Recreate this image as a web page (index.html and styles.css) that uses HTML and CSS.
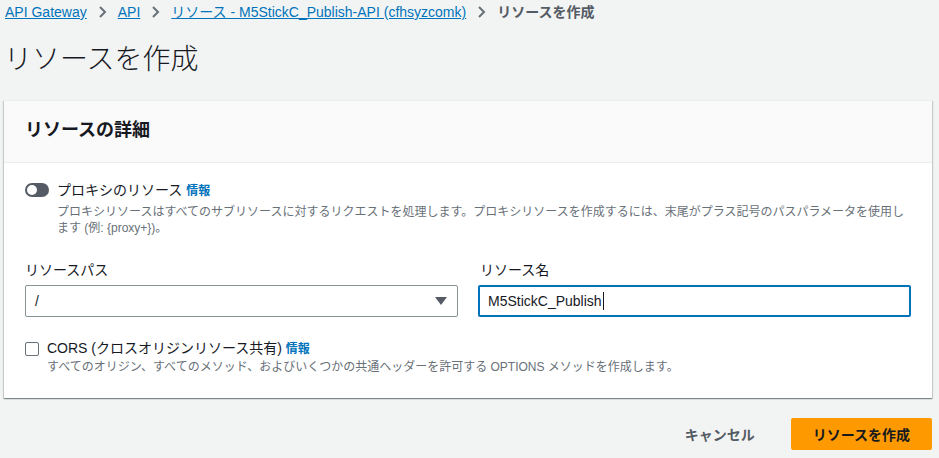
FILE: index.html
```html
<!DOCTYPE html>
<html lang="ja">
<head>
	<meta charset="UTF-8">
	<title>リソースを作成</title>
	<link rel="stylesheet" href="styles.css">
</head>
<body>
	<div class="page">
		<nav class="crumbs">
			<a href="#">API Gateway</a>
			<svg class="sep" width="10" height="12" viewBox="0 0 10 12"><polyline points="2,1 7,6 2,11" fill="none" stroke="#687078" stroke-width="2"/></svg>
			<a href="#">API</a>
			<svg class="sep" width="10" height="12" viewBox="0 0 10 12"><polyline points="2,1 7,6 2,11" fill="none" stroke="#687078" stroke-width="2"/></svg>
			<a href="#">リソース - M5StickC_Publish-API (cfhsyzcomk)</a>
			<svg class="sep" width="10" height="12" viewBox="0 0 10 12"><polyline points="2,1 7,6 2,11" fill="none" stroke="#687078" stroke-width="2"/></svg>
			<span class="current">リソースを作成</span>
		</nav>

		<h1 class="title">リソースを作成</h1>

		<div class="card">
			<div class="card_head">
				<h2>リソースの詳細</h2>
			</div>
			<div class="card_body">
				<div class="option">
					<span class="toggle"><span class="knob"></span></span>
					<div class="option_text">
						<div class="option_label">プロキシのリソース <a class="info" href="#">情報</a></div>
						<div class="option_desc">プロキシリソースはすべてのサブリソースに対するリクエストを処理します。プロキシリソースを作成するには、末尾がプラス記号のパスパラメータを使用します (例: {proxy+})。</div>
					</div>
				</div>

				<div class="fields">
					<div class="field">
						<label class="field_label">リソースパス</label>
						<div class="select">
							<span>/</span>
							<svg width="12" height="8" viewBox="0 0 12 8"><polygon points="0,0 12,0 6,8" fill="#545b64"/></svg>
						</div>
					</div>
					<div class="field">
						<label class="field_label">リソース名</label>
						<div class="input">M5StickC_Publish<span class="caret"></span></div>
					</div>
				</div>

				<div class="option option_cors">
					<span class="checkbox"></span>
					<div class="option_text">
						<div class="option_label">CORS (クロスオリジンリソース共有) <a class="info" href="#">情報</a></div>
						<div class="option_desc desc_tight">すべてのオリジン、すべてのメソッド、およびいくつかの共通ヘッダーを許可する OPTIONS メソッドを作成します。</div>
					</div>
				</div>
			</div>
		</div>

		<div class="actions">
			<button class="btn btn_cancel">キャンセル</button>
			<button class="btn btn_primary">リソースを作成</button>
		</div>
	</div>
</body>
</html>
```

FILE: styles.css
```css
body {
	margin: 0;
	background: #f2f3f3;
	font-family: "Liberation Sans", "Noto Sans CJK JP", sans-serif;
	color: #16191f;
	font-size: 14px;
}
.page {
	padding: 2px 7px 0 4px;
}
.crumbs {
	display: flex;
	align-items: center;
	height: 20px;
	padding-left: 1px;
	line-height: 20px;
}
.crumbs a {
	color: #0073bb;
	text-decoration: underline;
}
.sep {
	margin: 0 10px 0 11px;
}
.current {
	color: #545b64;
	font-weight: 700;
}
.title {
	margin: 20px 0 22px 0;
	font-size: 28px;
	line-height: 36px;
	font-weight: 300;
}
.card {
	background: #fff;
	border-top: 1px solid #eaeded;
	box-shadow: 0 1px 1px 0 rgba(0, 28, 36, .3), 1px 1px 1px 0 rgba(0, 28, 36, .15), -1px 1px 1px 0 rgba(0, 28, 36, .15);
}
.card_head {
	background: #fafafa;
	border-bottom: 1px solid #eaeded;
	padding: 17px 21px 20px;
}
.card_head h2 {
	margin: 0;
	font-size: 18px;
	line-height: 24px;
	font-weight: 700;
}
.card_body {
	padding: 17px 21px 23px;
}
.option {
	display: flex;
	align-items: flex-start;
}
.option_label {
	line-height: 20px;
}
.option_desc {
	margin-top: 3px;
	font-size: 12px;
	line-height: 16px;
	color: #687078;
}
.desc_tight {
	margin-top: 0;
}
.info {
	color: #0073bb;
	font-size: 12px;
	font-weight: 700;
	text-decoration: none;
}
.toggle {
	flex: none;
	position: relative;
	width: 24px;
	height: 14px;
	margin: 3px 8px 0 0;
	border-radius: 7px;
	background: #545b64;
}
.knob {
	position: absolute;
	left: 2px;
	top: 2px;
	width: 10px;
	height: 10px;
	border-radius: 50%;
	background: #fff;
}
.fields {
	display: grid;
	grid-template-columns: 1fr 1fr;
	column-gap: 20px;
	margin-top: 24px;
}
.field_label {
	display: block;
	line-height: 20px;
	margin-bottom: 5px;
}
.field:last-child .field_label {
	padding-left: 2px;
}
.select, .input {
	display: flex;
	align-items: center;
	box-sizing: border-box;
	height: 32px;
	border-radius: 2px;
}
.select {
	justify-content: space-between;
	padding: 0 10px 0 9px;
	border: 1px solid #879596;
}
.input {
	padding: 0 8px;
	border: 2px solid #0073bb;
}
.caret {
	display: inline-block;
	width: 1px;
	height: 18px;
	margin-left: 1px;
	background: #16191f;
}
.option_cors {
	margin-top: 21px;
}
.checkbox {
	flex: none;
	box-sizing: border-box;
	width: 14px;
	height: 14px;
	margin: 4px 8px 0 0;
	border: 1px solid #687078;
	border-radius: 2px;
}
.actions {
	display: flex;
	justify-content: flex-end;
	gap: 14px;
	margin-top: 20px;
}
.btn {
	height: 32px;
	border: none;
	border-radius: 2px;
	font-family: inherit;
	font-size: 14px;
	font-weight: 700;
	cursor: pointer;
}
.btn_cancel {
	padding: 0 22px;
	background: transparent;
	color: #545b64;
}
.btn_primary {
	padding: 0 22px;
	background: #ff9900;
	color: #16191f;
}
```
